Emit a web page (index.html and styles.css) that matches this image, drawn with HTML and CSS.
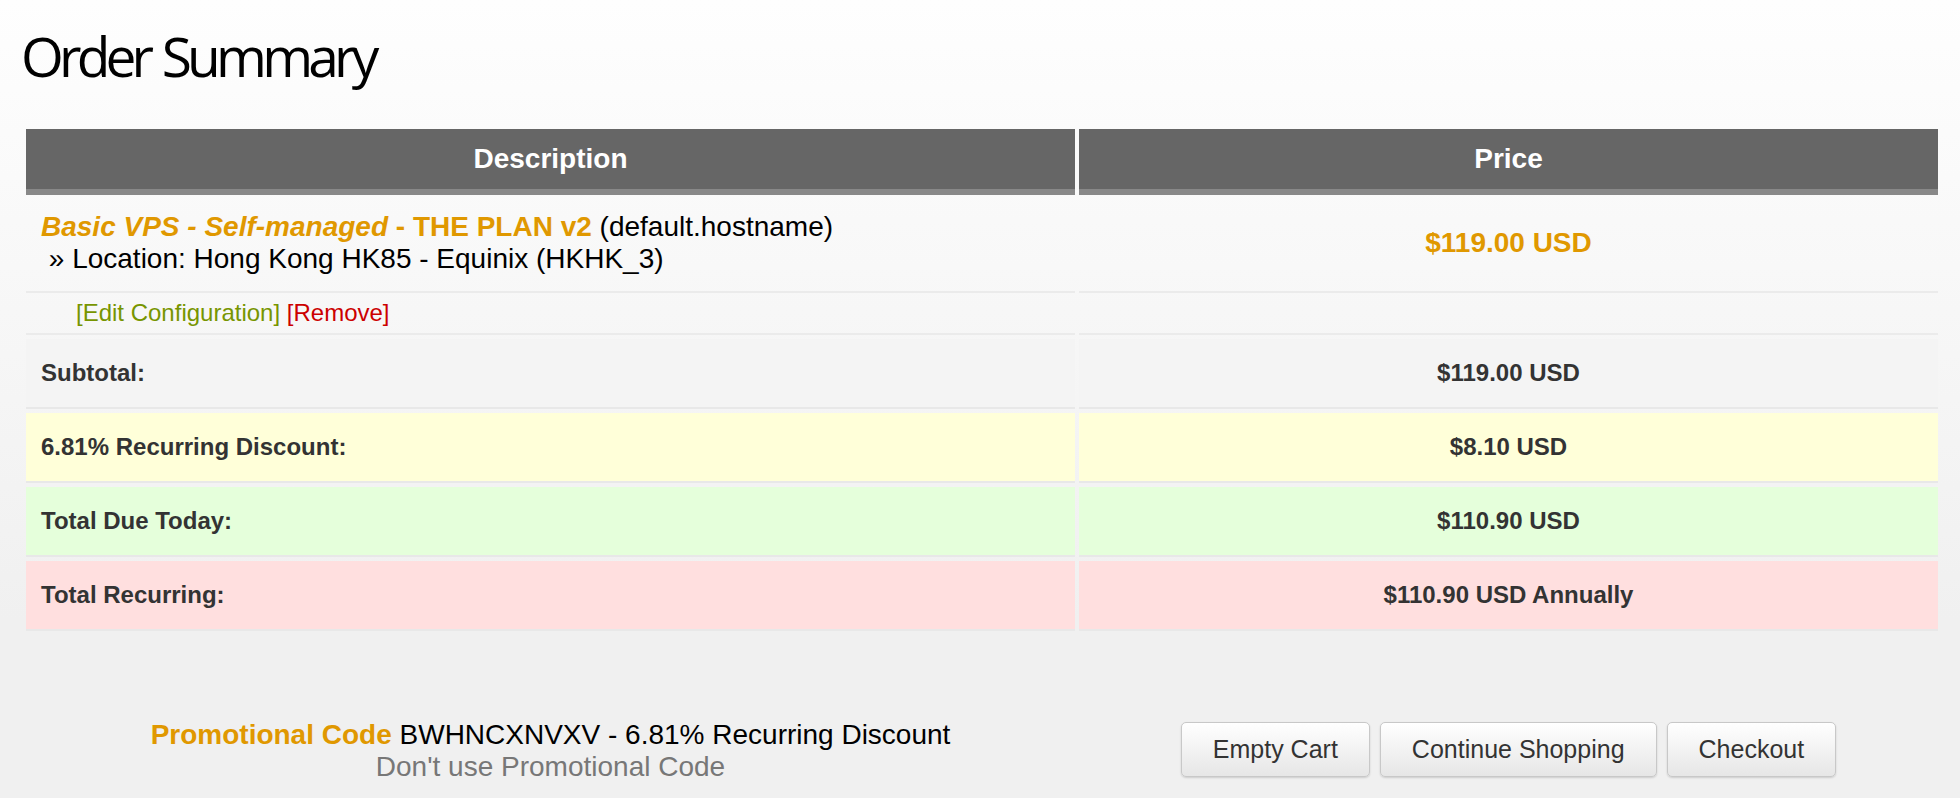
FILE: index.html
```html
<!DOCTYPE html>
<html lang="en">
<head>
<meta charset="utf-8">
<title>Order Summary</title>
<link rel="stylesheet" href="styles.css">
</head>
<body>
<div class="page">
  <h1 class="title">Order Summary</h1>
  <div class="cart">
    <div class="row head">
      <div class="cell">Description</div>
      <div class="cell">Price</div>
    </div>
    <div class="row product">
      <div class="cell desc">
        <div><em class="pname">Basic VPS - Self-managed</em><strong class="pname"> - THE PLAN v2</strong> (default.hostname)</div>
        <div>&nbsp;» Location: Hong Kong HK85 - Equinix (HKHK_3)</div>
      </div>
      <div class="cell price">$119.00 USD</div>
    </div>
    <div class="row config">
      <div class="cell"><a class="edit" href="#">[Edit Configuration]</a> <a class="remove" href="#">[Remove]</a></div>
      <div class="cell"></div>
    </div>
    <div class="row total subtotal">
      <div class="cell label">Subtotal:</div>
      <div class="cell amount">$119.00 USD</div>
    </div>
    <div class="row total discount">
      <div class="cell label">6.81% Recurring Discount:</div>
      <div class="cell amount">$8.10 USD</div>
    </div>
    <div class="row total due">
      <div class="cell label">Total Due Today:</div>
      <div class="cell amount">$110.90 USD</div>
    </div>
    <div class="row total recurring">
      <div class="cell label">Total Recurring:</div>
      <div class="cell amount">$110.90 USD Annually</div>
    </div>
  </div>
  <div class="footer">
    <div class="promo">
      <div><strong class="promo-label">Promotional Code</strong> BWHNCXNVXV - 6.81% Recurring Discount</div>
      <div><a class="promo-remove" href="#">Don't use Promotional Code</a></div>
    </div>
    <div class="actions">
      <button class="btn" type="button">Empty Cart</button>
      <button class="btn" type="button">Continue Shopping</button>
      <button class="btn" type="button">Checkout</button>
    </div>
  </div>
</div>
</body>
</html>
```
FILE: styles.css
```css
html, body {
  margin: 0;
  padding: 0;
}
body {
  background-color: #f0f0f0;
  background-image: linear-gradient(#fefefe 0, #f0f0f0 620px);
  background-repeat: no-repeat;
  font-family: "Liberation Sans", Arial, sans-serif;
  color: #000;
  min-height: 798px;
}
.page {
  padding: 0 22px 0 26px;
}
.title {
  font-family: "Open Sans", "Noto Sans", sans-serif;
  font-weight: 380;
  font-size: 55px;
  line-height: 79px;
  margin: 16px 0 34px -5px;
  letter-spacing: -4.8px;
  word-spacing: 3px;
  color: #000;
}
.row {
  display: grid;
  grid-template-columns: 1049fr 859fr;
  column-gap: 4px;
}
.head .cell {
  background: #666;
  border-bottom: 6px solid #888;
  color: #fff;
  font-weight: bold;
  font-size: 28px;
  line-height: 60px;
  text-align: center;
}
.product .cell {
  height: 96px;
  border-bottom: 2px solid #ebebeb;
  font-size: 28px;
  line-height: 32px;
  box-sizing: content-box;
}
.product .desc {
  padding-left: 15px;
  display: flex;
  flex-direction: column;
  justify-content: center;
}
.pname {
  color: #e09800;
  font-weight: bold;
}
.product .price {
  display: flex;
  align-items: center;
  justify-content: center;
  color: #e09800;
  font-weight: bold;
}
.config .cell {
  height: 40px;
  line-height: 40px;
  border-bottom: 2px solid #ebebeb;
  font-size: 24px;
  padding-left: 50px;
}
.config .cell + .cell {
  padding-left: 0;
}
.edit {
  color: #779500;
  text-decoration: none;
}
.remove {
  color: #cc0000;
  text-decoration: none;
}
.total {
  margin-top: 4px;
}
.total .cell {
  height: 68px;
  line-height: 68px;
  border-bottom: 2px solid #e8e8e8;
  font-size: 24px;
  font-weight: bold;
  color: #333;
}
.total .label {
  padding-left: 15px;
}
.total .amount {
  text-align: center;
}
.subtotal .cell {
  background: #f4f4f4;
}
.discount .cell {
  background: #ffffd9;
}
.due .cell {
  background: #e5ffdb;
}
.recurring .cell {
  background: #ffdfdf;
}
.footer {
  display: grid;
  grid-template-columns: 1049fr 859fr;
  column-gap: 4px;
  align-items: center;
  margin-top: 84px;
}
.promo {
  text-align: center;
  font-size: 28px;
  line-height: 32px;
  padding-top: 4px;
}
.promo-label {
  color: #e09800;
}
.promo-remove {
  color: #777;
  text-decoration: none;
}
.actions {
  display: flex;
  justify-content: center;
  gap: 10px;
}
.btn {
  font-family: "Liberation Sans", Arial, sans-serif;
  font-size: 25px;
  line-height: 29px;
  color: #333;
  padding: 12px 31px;
  border: 1px solid #c8c8c8;
  border-radius: 5px;
  background: linear-gradient(#ffffff, #e6e6e6);
  box-shadow: 0 1px 2px rgba(0, 0, 0, 0.15);
  cursor: pointer;
}
```
